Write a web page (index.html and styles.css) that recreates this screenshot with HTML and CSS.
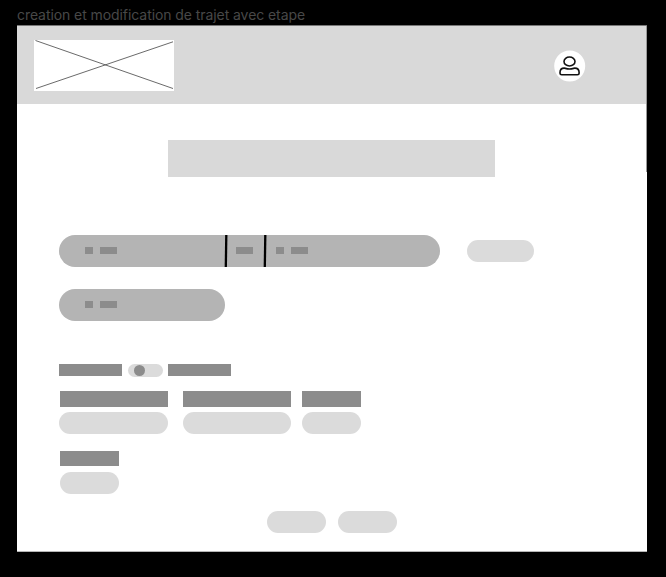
FILE: index.html
```html
<!DOCTYPE html>
<html lang="fr">
<head>
<meta charset="utf-8">
<title>creation et modification de trajet avec etape</title>
<link rel="stylesheet" href="styles.css">
</head>
<body>
<h1 class="frame-name"><span>creation et modification de trajet avec etape</span></h1>
<main class="frame">
  <header class="header">
    <svg class="logo" width="140" height="51" viewBox="0 0 140 51" fill="none" stroke="#444" stroke-width=".8">
      <path d="M1.500 .5 139 48.500M2 48.500 139 1.800"/>
    </svg>
    <svg class="avatar" width="32" height="32" viewBox="0 0 32 32" fill="none">
      <circle cx="15.700" cy="16" r="15.500" fill="#fff"/>
      <g stroke="#111" stroke-width="1.600">
        <ellipse cx="15.500" cy="11.500" rx="5.500" ry="4.500"/>
        <path d="M6 22.600c0-2.700 1.700-4.500 4.200-4.500.9 0 2.300.9 5.300.9s4.400-.9 5.300-.9c2.500 0 4.300 1.800 4.300 4.500v.6c0 .9-.7 1.500-1.700 1.500H7.700c-1 0-1.700-.6-1.700-1.500z"/>
      </g>
    </svg>
  </header>
  <div class="title"></div>
  <section class="search">
    <div class="trip-bar">
      <div class="place"><i class="dot"></i><i class="dash"></i></div>
      <svg class="divider" width="4" height="32" viewBox="0 0 4 32"><path d="M2.300 0 1.800 32" stroke="#000" stroke-width="2.300"/></svg>
      <div class="via"><i class="dash"></i></div>
      <svg class="divider" width="4" height="32" viewBox="0 0 4 32"><path d="M2.300 0 1.800 32" stroke="#000" stroke-width="2.300"/></svg>
      <div class="arrival"><i class="dot"></i><i class="dash"></i></div>
    </div>
    <div class="pill add"></div>
  </section>
  <div class="trip-bar stop">
    <div class="place"><i class="dot"></i><i class="dash"></i></div>
  </div>
  <div class="switch-row">
    <div class="option"></div>
    <div class="toggle"><i class="knob"></i></div>
    <div class="option right"></div>
  </div>
  <div class="fields">
    <div class="field wide"><div class="label"></div><div class="pill"></div></div>
    <div class="field medium"><div class="label"></div><div class="pill"></div></div>
    <div class="field small"><div class="label"></div><div class="pill"></div></div>
  </div>
  <div class="field last"><div class="label"></div><div class="pill"></div></div>
  <footer class="actions"><div class="pill"></div><div class="pill"></div></footer>
</main>
</body>
</html>
```
FILE: styles.css
```css
* { box-sizing: border-box; }
body {
  margin: 0;
  height: 577px;
  overflow: hidden;
  background: #000;
}
.frame-name {
  margin: 0;
  height: 25px;
  padding: 6px 0 0 17px;
  font: 400 14px/18px Inter, sans-serif;
  letter-spacing: -0.075px;
  color: #484848;
  white-space: nowrap;
}
.frame {
  position: relative;
  width: 630px;
  height: 527px;
  margin-left: 17px;
  background: #fff;
  border-top: 1px solid #777;
  border-bottom: 1px solid #b5b5b5;
}
/* thin shaded edge along the upper right side */
.frame::after {
  content: "";
  position: absolute;
  top: 0;
  right: 0;
  width: 1px;
  height: 146px;
  background: #999;
}
.header {
  display: flex;
  justify-content: space-between;
  align-items: flex-start;
  height: 78px;
  padding: 14px 61px 0 17px;
  background: #d9d9d9;
}
.logo { background: #fff; }
.avatar { margin-top: 10px; }
.title {
  width: 327px;
  height: 37px;
  margin: 36px 0 0 151px;
  background: #d9d9d9;
}
.search {
  display: flex;
  align-items: center;
  gap: 27px;
  margin: 58px 0 0 42px;
}
.trip-bar {
  display: flex;
  align-items: center;
  width: 381px;
  height: 32px;
  border-radius: 16px;
  background: #b4b4b4;
}
.stop {
  width: 166px;
  margin: 22px 0 0 42px;
}
.place, .via, .arrival {
  display: flex;
  gap: 7px;
  padding-bottom: 2px;
}
.place {
  width: 165px;
  padding-left: 26px;
}
.via {
  width: 35px;
  padding-left: 8px;
}
.arrival { padding-left: 9px; }
.dot, .dash {
  height: 7px;
  background: #8c8c8c;
}
.dot { width: 8px; }
.dash { width: 17px; }
.divider { flex: none; }
.pill {
  height: 22px;
  border-radius: 11px;
  background: #dbdbdb;
}
.add { width: 67px; }
.switch-row {
  display: flex;
  align-items: flex-start;
  height: 13px;
  margin: 43px 0 0 42px;
}
.option {
  width: 63px;
  height: 12px;
  background: #8c8c8c;
}
.toggle {
  display: flex;
  align-items: center;
  width: 35px;
  height: 13px;
  margin: 0 5px 0 6px;
  padding-left: 6px;
  border-radius: 7px;
  background: #dbdbdb;
}
.knob {
  width: 11px;
  height: 11px;
  border-radius: 50%;
  background: #8c8c8c;
}
.fields {
  display: flex;
  margin: 14px 0 0 42px;
}
.label {
  height: 16px;
  margin-bottom: 5px;
  background: #8c8c8c;
}
.wide { width: 109px; }
.wide .label { margin-left: 1px; }
.medium {
  width: 108px;
  margin-left: 15px;
}
.small {
  width: 59px;
  margin-left: 11px;
}
.last {
  width: 59px;
  margin: 17px 0 0 43px;
}
.last .label {
  height: 15px;
  margin-bottom: 6px;
}
.actions {
  display: flex;
  gap: 12px;
  margin: 17px 0 0 250px;
}
.actions .pill { width: 59px; }
```
